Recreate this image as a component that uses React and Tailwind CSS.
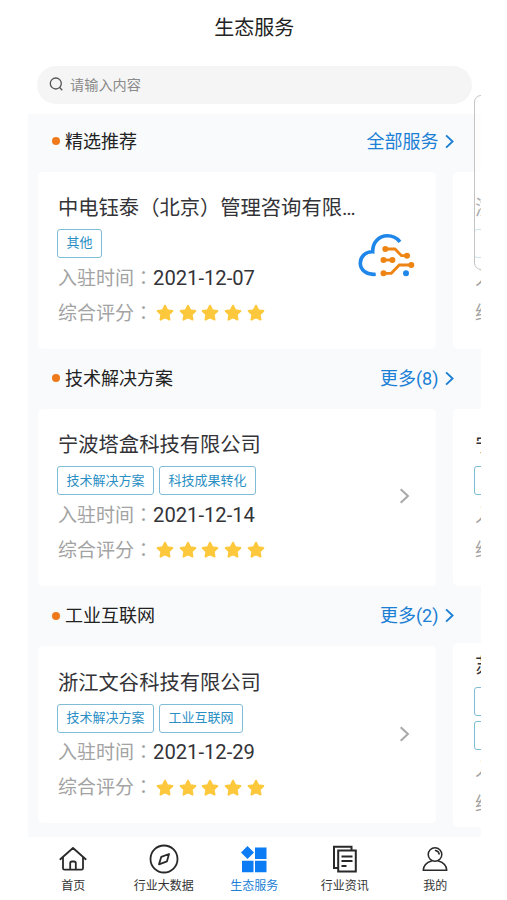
import React from 'react';

const sections = [
  {
    title: '精选推荐',
    more: '全部服务',
    logo: true,
    company: { name: '中电钰泰（北京）管理咨询有限公司', tags: ['其他'], date: '2021-12-07' },
    next: { name: '浙江', tags: ['其他'], date: '2021-12-07' },
  },
  {
    title: '技术解决方案',
    more: '更多(8)',
    company: { name: '宁波塔盒科技有限公司', tags: ['技术解决方案', '科技成果转化'], date: '2021-12-14' },
    next: { name: '宁波', tags: ['技术解决方案'], date: '2021-12-14' },
  },
  {
    title: '工业互联网',
    more: '更多(2)',
    company: { name: '浙江文谷科技有限公司', tags: ['技术解决方案', '工业互联网'], date: '2021-12-29' },
    next: { name: '苏州', tags: ['技术解决方案', '工业互联网'], date: '2021-12-29', stacked: true },
  },
];

const Chevron = ({ className }) => (
  <svg className={className} viewBox="0 0 10 16" fill="none" stroke="currentColor" strokeWidth="2.1">
    <path d="M1.2 1.2 8.4 8l-7.2 6.8" />
  </svg>
);

const Star = () => (
  <svg className="h-[18px] w-[18px]" viewBox="0 0 18 18" fill="#fdc83c" stroke="#fdc83c" strokeWidth="2" strokeLinejoin="round">
    <path d="M9 1.7l2.2 4.6 5.1.7-3.7 3.5.9 5.1L9 13.2l-4.5 2.4.9-5.1L1.7 7l5.1-.7z" />
  </svg>
);

// cloud with circuit lines
const CloudLogo = () => (
  <svg className="mb-[12px] -ml-[3px] h-[46px] w-[58px] shrink-0" viewBox="0 0 58 46" fill="none">
    <g stroke="#1f87ea" strokeWidth="3.6">
      <path d="M18.700 43.200C9 44.300 3.300 38.500 3.300 32c0-6.500 5.500-11.500 12.400-11.200C15.500 11.500 22 4.800 30.400 4.800c5 0 9.300 2 12.600 6" />
    </g>
    <circle cx="49" cy="42.300" r="3" fill="#1f87ea" />
    <g stroke="#ee8413" strokeWidth="2.800">
      <path d="M28.300 18H38l6.500 6.700H50" />
      <path d="M26.300 29h9" />
      <path d="M26.300 42.300h8l8-8.300h12" />
    </g>
    <g fill="#ee8413">
      <circle cx="28.300" cy="18" r="3" />
      <circle cx="50" cy="24.700" r="3" />
      <circle cx="26.500" cy="29" r="3" />
      <circle cx="35.400" cy="29" r="3" />
      <circle cx="26.500" cy="42.300" r="3" />
      <circle cx="54.300" cy="34" r="3" />
    </g>
  </svg>
);

const Label = ({ children }) => (
  <span className="shrink-0 text-[19px] text-[#a3a3a3]">
    {children}
    <span className="font-['Noto_Sans_CJK_TC',sans-serif]">：</span>
  </span>
);

const CompanyInfo = ({ company }) => (
  <div className="w-[302px] shrink-0">
    <h3 className="h-[30px] truncate text-[20.300px] leading-[30px] text-[#333338]">{company.name}</h3>
    <div className={company.stacked ? 'mt-[6px] flex flex-col items-start gap-[5px]' : 'mt-[6px] flex gap-[5px]'}>
      {company.tags.map((tag) => (
        <span key={tag} className="-ml-px mr-px flex h-[29px] items-center rounded-[3px] border border-[#7fbdd6] px-[8.500px] pb-px text-[13px] text-[#2b8fc4]">
          {tag}
        </span>
      ))}
    </div>
    <div className="mt-[6px] flex h-[28px] items-center">
      <Label>入驻时间</Label>
      <span className="text-[20.200px] text-[#333338]">{company.date}</span>
    </div>
    <div className="mt-[7px] flex h-[28px] items-center">
      <Label>综合评分</Label>
      <div className="ml-[3px] flex gap-[4.700px]">
        {[1, 2, 3, 4, 5].map((n) => <Star key={n} />)}
      </div>
    </div>
  </div>
);

const Section = ({ title, more, logo, company, next }) => (
  <section className="h-[237.300px]">
    <div className="flex h-[54px] items-center pl-[24px] pr-[27px]">
      <i className="h-2 w-2 rounded-full bg-[#ee7a1c]" />
      <h2 className="ml-[5px] text-[18px] text-[#222]">{title}</h2>
      <a className="ml-auto flex items-center text-[18px] text-[#1b80d5]">
        {more}
        <Chevron className="ml-[6px] h-[15px] w-[9px]" />
      </a>
    </div>
    <div className="flex h-[184px] items-center gap-[17px] overflow-hidden pl-[10px]">
      <div className="flex h-[177px] w-[398px] shrink-0 items-center rounded-[5px] bg-white pl-[20px]">
        <CompanyInfo company={company} />
        {logo ? <CloudLogo /> : <Chevron className="mb-[2px] ml-[39px] h-[16px] w-[11px] text-[#aaa]" />}
      </div>
      <div className={next.stacked ? 'flex h-[184px] w-[398px] shrink-0 items-center rounded-[5px] bg-white pl-[22px]' : 'flex h-[177px] w-[398px] shrink-0 items-center rounded-[5px] bg-white pl-[22px]'}>
        <CompanyInfo company={next} />
      </div>
    </div>
  </section>
);

const HomeIcon = () => (
  <svg className="h-[30px] w-[30px]" viewBox="0 0 30 30" fill="none" stroke="#292929" strokeWidth="1.800" strokeLinecap="round" strokeLinejoin="round">
    <path d="M2.300 15.200 15 4l12.700 11.200M5 13.500V24.300c0 .8.600 1.400 1.400 1.400h17.200c.8 0 1.400-.6 1.400-1.400V13.500M12.200 25.500v-6.200c0-1 .8-1.800 1.800-1.800h2c1 0 1.800.8 1.800 1.800v6.200" />
  </svg>
);

const CompassIcon = () => (
  <svg className="h-[30px] w-[30px]" viewBox="0 0 30 30" fill="none" stroke="#292929" strokeWidth="1.800" strokeLinejoin="round">
    <circle cx="15" cy="15" r="13.500" />
    <path d="m20 10-2 7.300-8 3 2.300-7.500z" />
  </svg>
);

const ServiceIcon = () => (
  <svg className="h-[30px] w-[30px]" viewBox="0 0 30 30" fill="#0c7cf5">
    <path d="m8.500 2 6.500 6.500L8.500 15 2 8.500zM16 3.500h11.500V15H16zM3 16.700h11.500v11.500H3zM16 16.700h11.500v11.500H16z" />
  </svg>
);

const NewsIcon = () => (
  <svg className="h-[30px] w-[30px]" viewBox="0 0 30 30" fill="none" stroke="#292929" strokeWidth="2">
    <path d="M8 24H4V2.800h17.500V6" />
    <path d="M8.200 6.500h17.600v21H8.200zM11.500 12.500h11M11.500 17h11M11.500 22h5" />
  </svg>
);

const UserIcon = () => (
  <svg className="h-[30px] w-[30px]" viewBox="0 0 30 30" fill="none" stroke="#292929" strokeWidth="1.500" strokeLinecap="round" strokeLinejoin="round">
    <circle cx="15" cy="10.500" r="6.800" />
    <path d="M11.500 17C6.500 18.500 3.500 22 3.200 26.300h23.600C26.500 22 23.500 18.500 18.500 17M15.500 6.500c2 .3 3.300 1.500 3.700 3.500" />
  </svg>
);

const tabs = [
  { name: '首页', Icon: HomeIcon },
  { name: '行业大数据', Icon: CompassIcon },
  { name: '生态服务', Icon: ServiceIcon, active: true },
  { name: '行业资讯', Icon: NewsIcon },
  { name: '我的', Icon: UserIcon },
];

const App = () => {
  return (
    <div className="h-[900px] w-[507px] overflow-hidden bg-white pl-[28px] font-[Roboto,'Noto_Sans_CJK_SC',sans-serif]">
      <div className="relative flex h-full w-[452.500px] flex-col overflow-hidden">
        <header className="h-[114px] shrink-0">
          <h1 className="h-[66px] pt-[13px] text-center text-[20px] leading-[30px] text-[#222]">生态服务</h1>
          <div className="ml-[9px] flex h-[38px] w-[435px] items-center rounded-full bg-[#f5f5f5] pl-[12px]">
            <svg className="mb-px h-[15px] w-[15px]" viewBox="0 0 15 15" fill="none" stroke="#555" strokeWidth="1.300">
              <circle cx="6.800" cy="6.500" r="5.500" />
              <path d="m10.700 10.500 2.500 2.700" />
            </svg>
            <span className="ml-[6px] pt-px text-[14.200px] text-[#8b8b8b]">请输入内容</span>
          </div>
        </header>

        <main className="h-[723px] shrink-0 overflow-hidden bg-[#f9fafb]">
          {sections.map((section) => <Section key={section.title} {...section} />)}
        </main>

        <nav className="flex h-[63px] shrink-0 bg-white">
          {tabs.map(({ name, Icon, active }) => (
            <a key={name} className={active ? 'flex flex-1 flex-col items-center pt-[7px] text-[12px] leading-[24px] text-[#1b80d5]' : 'flex flex-1 flex-col items-center pt-[7px] text-[12px] leading-[24px] text-[#333]'}>
              <Icon />
              {name}
            </a>
          ))}
        </nav>

        {/* edge of the side drawer */}
        <div className="absolute -right-[10px] top-[95px] h-[175px] w-[17px] rounded-l-[7px] border border-[#c4c4c4] bg-white/60" />
      </div>
    </div>
  );
};

export default App;
